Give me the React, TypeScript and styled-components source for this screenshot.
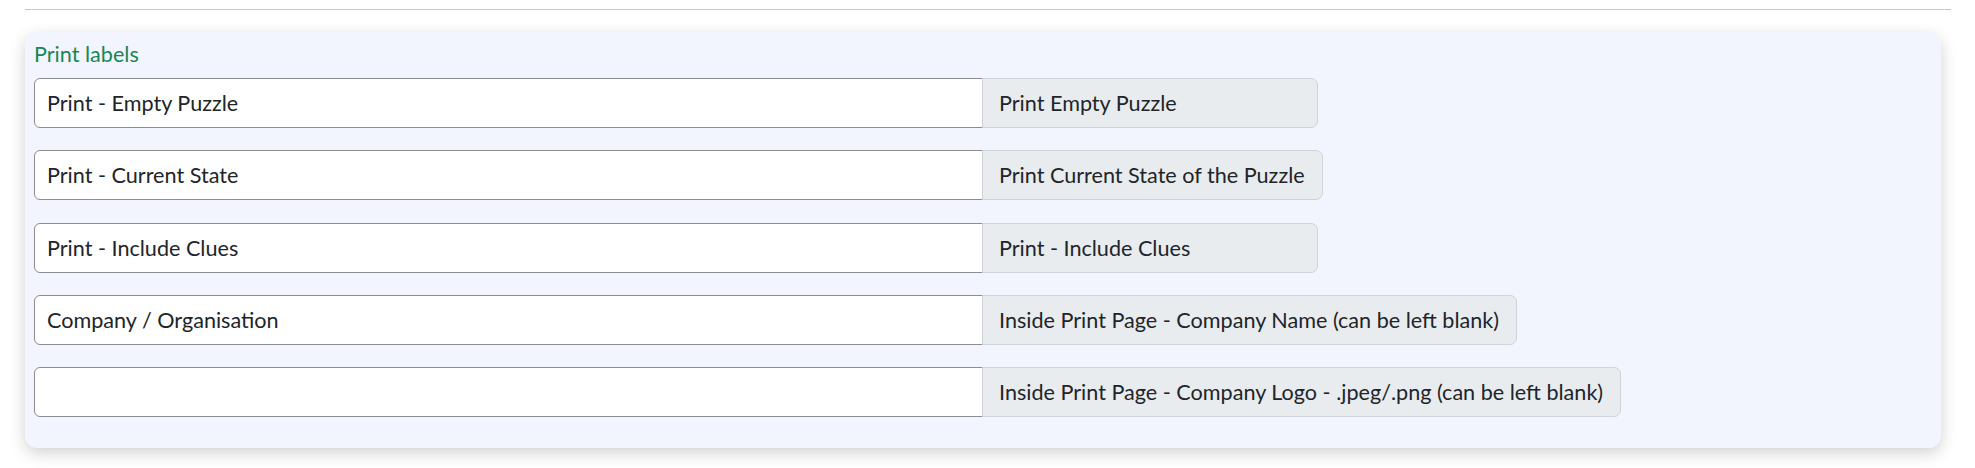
import * as React from "react";
import styled, { createGlobalStyle } from "styled-components";

const GlobalStyle = createGlobalStyle`
  html, body {
    margin: 0;
    padding: 0;
    background: #ffffff;
  }
  body {
    font-family: Lato, "Open Sans", "Liberation Sans", sans-serif;
    color: #212529;
  }
`;

const Page = styled.div`
  padding: 9px 24px 20px 25px;
`;

const Divider = styled.hr`
  margin: 0 0 22px 0;
  border: 0;
  border-top: 1px solid #c8c8c8;
`;

const Panel = styled.section`
  margin-right: 10px;
  background-color: #f2f5fd;
  border-radius: 12px;
  padding: 6px 9px 31px 9px;
  box-shadow: 0 5px 16px rgba(0, 0, 0, 0.18);
`;

const PanelTitle = styled.div`
  color: #198754;
  font-size: 21.6px;
  line-height: 32px;
  margin-bottom: 8px;
`;

const Rows = styled.div`
  display: flex;
  flex-direction: column;
  gap: 22.25px;
`;

const InputGroup = styled.div`
  display: flex;
  align-items: stretch;
  height: 50px;
`;

const TextInput = styled.input`
  flex: 0 0 50%;
  box-sizing: border-box;
  height: 100%;
  margin: 0;
  padding: 0 12px;
  font-family: Lato, "Open Sans", "Liberation Sans", sans-serif;
  font-size: 21.6px;
  color: #212529;
  background: #ffffff;
  border: 1px solid #8d8d8f;
  border-radius: 6px 0 0 6px;
  outline: none;
`;

const Addon = styled.span`
  display: flex;
  align-items: center;
  box-sizing: border-box;
  min-width: 336px;
  padding: 0 17px 0 16px;
  margin-left: -1px;
  font-size: 21.6px;
  color: #212529;
  white-space: nowrap;
  background-color: #e9ecef;
  border: 1px solid #ced4da;
  border-radius: 0 7px 7px 0;
`;

interface ILabelRow {
  value: string;
  hint: string;
}

const rows: ILabelRow[] = [
  { value: "Print - Empty Puzzle", hint: "Print Empty Puzzle" },
  { value: "Print - Current State", hint: "Print Current State of the Puzzle" },
  { value: "Print - Include Clues", hint: "Print - Include Clues" },
  {
    value: "Company / Organisation",
    hint: "Inside Print Page - Company Name (can be left blank)",
  },
  {
    value: "",
    hint: "Inside Print Page - Company Logo - .jpeg/.png (can be left blank)",
  },
];

const App: React.FunctionComponent = () => {
  return (
    <>
      <GlobalStyle />
      <Page>
        <Divider />
        <Panel>
          <PanelTitle>Print labels</PanelTitle>
          <Rows>
            {rows.map((row, i) => (
              <InputGroup key={i}>
                <TextInput type="text" defaultValue={row.value} />
                <Addon>{row.hint}</Addon>
              </InputGroup>
            ))}
          </Rows>
        </Panel>
      </Page>
    </>
  );
};

export default App;
